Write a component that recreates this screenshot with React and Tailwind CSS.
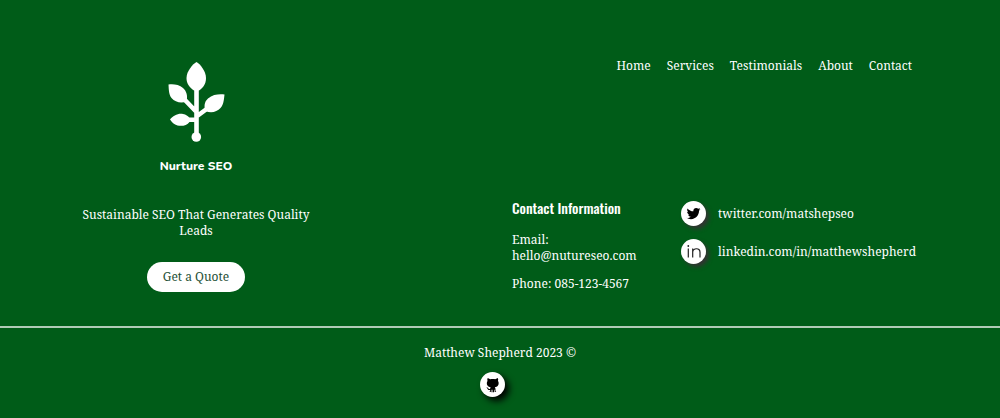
import { IoLogoTwitter } from "react-icons/io";

const navItems = ["Home", "Services", "Testimonials", "About", "Contact"];

function SproutLogo() {
  return (
    <svg viewBox="0 0 58 80" className="h-20 w-[58px]" fill="#fff" aria-hidden="true">
      <path d="M29.500 0C26 2 19.500 9 19.500 16C19.500 22 23 26 27 28.500H32C36 26 39 22 39 16C39 9 33 2 29.500 0Z" />
      <path d="M1.500 22.500C5 22 12 22 16 26C19.500 29 21 34 19.500 39.500C14 42 8 40 4.500 36C1.500 32 1.800 26 1.500 22.500Z" />
      <path d="M57.500 32.500C53 32 46 32 41 36.500C37 40 37 45 38.500 49C44 51.500 50 50 53.500 46C57 42 57 36 57.500 32.500Z" />
      <path d="M3 57.500C6 54 11 51 16 52C19 52.500 21 54 22.500 56V60C20 63.500 15 64.500 10.500 63.500C7 62.500 5 60.500 3 57.500Z" />
      <path d="M29.500 24V74M17 37L29.500 50M41 46L29.500 54.500M19 57.800H29.500" stroke="#fff" strokeWidth="4.600" fill="none" />
      <circle cx="29.300" cy="75" r="4.800" />
    </svg>
  );
}

function LinkedInMark() {
  return (
    <svg viewBox="0 0 16 16" className="size-4" fill="none" stroke="#222" strokeWidth="1.200" aria-hidden="true">
      <path d="M2.300 4.500V13.500M6.700 4.500V13.500M6.700 8C7.200 3.900 14 3.300 14 8.300V13.500" />
      <circle cx="2.300" cy="2" r=".9" fill="#222" stroke="none" />
    </svg>
  );
}

function Octocat() {
  return (
    <svg viewBox="0 0 15 16" className="h-4 w-[15px]" fill="#000" aria-hidden="true">
      <path d="M2.700 1L5.300 2.300C6.800 1.900 8.700 1.900 10.200 2.300L12.800 1C13.300 2 13.300 3 13 3.900C13.900 5.200 13.900 7.200 13 8.500C12.300 9.600 11 10 9.800 10.200C10.400 10.800 10.500 11.500 10.500 12.300V14.200L11.300 15H9.700L9.500 12.700H9V15.200H8V12.700H7.500V15.200H6.500V12.700H6L5.800 15H4.300L5.100 14.200V13C3.300 13.300 2.900 12.500 2.500 11.700C2.200 11.100 1.700 11 1.200 10.600C2.600 10.200 3.100 11 3.500 11.600C3.900 12.200 4.500 12.200 5.100 11.900C5.100 11.200 5.300 10.600 5.700 10.200C4.500 10 3.200 9.600 2.500 8.500C1.600 7.200 1.600 5.200 2.500 3.900C2.200 3 2.200 2 2.700 1Z" />
    </svg>
  );
}

export default function App() {
  return (
    <footer className="min-h-screen bg-[#005c18] font-['Noto_Serif','DejaVu_Serif_Condensed','DejaVu_Serif',serif] text-[12px] leading-4 text-white">
      <div className="flex justify-between px-[88px] pt-[62px] pb-[34px]">
        <section className="flex w-[216px] flex-col items-center text-center">
          <SproutLogo />
          <h2 className="mt-4 font-[Nunito,Lato,sans-serif] text-[12px] leading-4 font-extrabold">Nurture SEO</h2>
          <p className="-mx-2 mt-[33px]">Sustainable SEO That Generates Quality<br />Leads</p>
          <button type="button" className="mt-[23px] h-[30px] rounded-full bg-white px-4 text-[#1f5137]">
            Get a Quote
          </button>
        </section>

        <div className="flex w-[400px] flex-col justify-between">
          <nav className="-mt-1 flex justify-end gap-4">
            {navItems.map((item) => (
              <a key={item} href="#">{item}</a>
            ))}
          </nav>
          <div className="flex justify-between">
            <section className="w-[130px]">
              <h3 className="font-[Oswald,'Liberation_Sans_Narrow',sans-serif] text-[14px] leading-4 font-medium">Contact Information</h3>
              <p className="mt-4">Email:<br /><a href="mailto:hello@nutureseo.com">hello@nutureseo.com</a></p>
              <p className="mt-3">Phone: 085-123-4567</p>
            </section>
            <ul className="-mr-1 flex flex-col gap-[13px] pt-px">
              <li>
                <a href="#" className="flex items-center gap-3">
                  <span className="flex size-[25px] items-center justify-center rounded-full bg-white text-black shadow-[3px_3px_4px_#333]">
                    <IoLogoTwitter size={15} />
                  </span>
                  twitter.com/matshepseo
                </a>
              </li>
              <li>
                <a href="#" className="flex items-center gap-3">
                  <span className="flex size-[25px] items-center justify-center rounded-full bg-white shadow-[3px_3px_4px_#333]">
                    <LinkedInMark />
                  </span>
                  linkedin.com/in/matthewshepherd
                </a>
              </li>
            </ul>
          </div>
        </div>
      </div>
      <div className="flex flex-col items-center border-t-2 border-[#b0cbb6] pt-[17px]">
        <p>Matthew Shepherd 2023 ©</p>
        <a href="#" aria-label="GitHub" className="mt-[11px] mr-4 flex size-[25px] items-center justify-center rounded-full bg-white shadow-[4px_4px_7px_#000]">
          <Octocat />
        </a>
      </div>
    </footer>
  );
}
